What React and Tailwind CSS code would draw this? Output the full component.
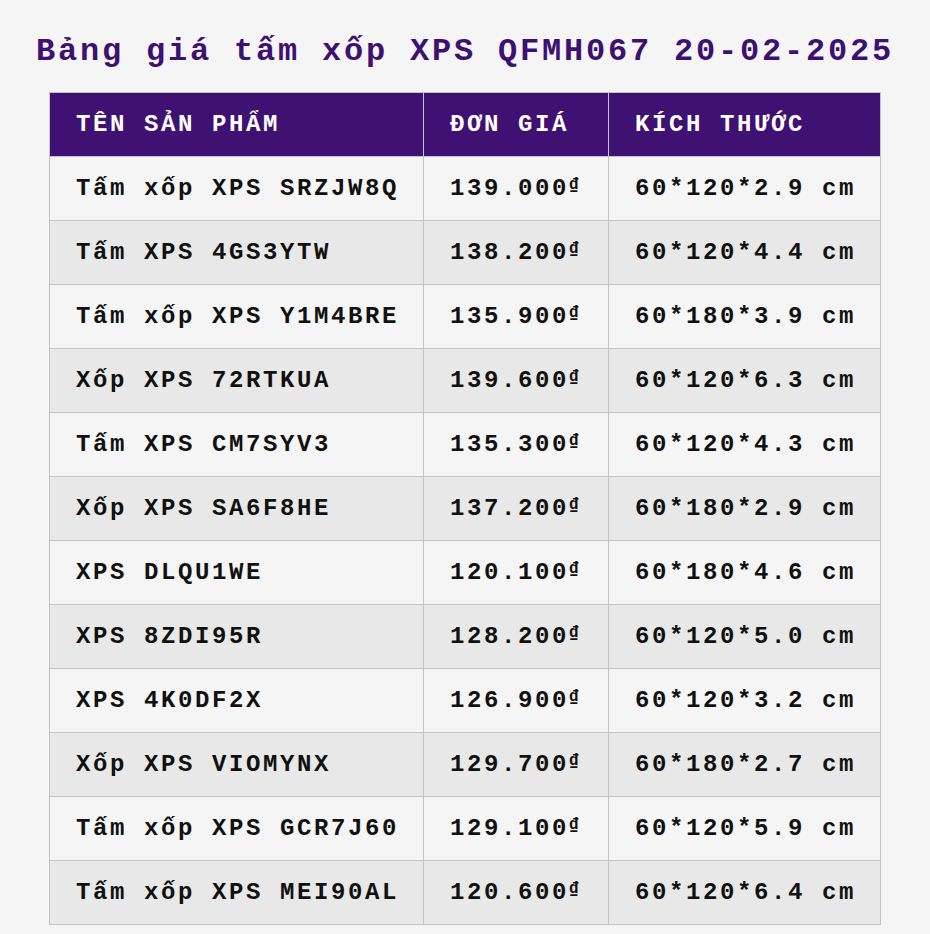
import React from "react";

const rows = [
  ["Tấm xốp XPS SRZJW8Q", "139.000", "60*120*2.9 cm"],
  ["Tấm XPS 4GS3YTW", "138.200", "60*120*4.4 cm"],
  ["Tấm xốp XPS Y1M4BRE", "135.900", "60*180*3.9 cm"],
  ["Xốp XPS 72RTKUA", "139.600", "60*120*6.3 cm"],
  ["Tấm XPS CM7SYV3", "135.300", "60*120*4.3 cm"],
  ["Xốp XPS SA6F8HE", "137.200", "60*180*2.9 cm"],
  ["XPS DLQU1WE", "120.100", "60*180*4.6 cm"],
  ["XPS 8ZDI95R", "128.200", "60*120*5.0 cm"],
  ["XPS 4K0DF2X", "126.900", "60*120*3.2 cm"],
  ["Xốp XPS VIOMYNX", "129.700", "60*180*2.7 cm"],
  ["Tấm xốp XPS GCR7J60", "129.100", "60*120*5.9 cm"],
  ["Tấm xốp XPS MEI90AL", "120.600", "60*120*6.4 cm"],
];

export default function App() {
  return (
    <div
      className="min-h-[934px] w-full bg-[#f5f5f5] pt-[28px] pb-[10px]"
      style={{ fontFamily: '"Courier New", "Liberation Mono", monospace' }}
    >
      <h1 className="text-center text-[32px] leading-[48px] font-bold tracking-[2.8px] text-[#3d1171]">
        Bảng giá tấm xốp XPS QFMH067 20-02-2025
      </h1>
      <table className="mx-auto mt-[16px] w-[831px] table-fixed border-collapse text-[24px] font-bold tracking-[2.6px]">
        <colgroup>
          <col className="w-[374px]" />
          <col className="w-[185px]" />
          <col className="w-[272px]" />
        </colgroup>
        <thead>
          <tr className="h-[64px] bg-[#3f1172] text-white">
            <th className="border border-[#c4c4c4] pl-[26px] text-left font-bold">TÊN SẢN PHẨM</th>
            <th className="border border-[#c4c4c4] pl-[26px] text-left font-bold">ĐƠN GIÁ</th>
            <th className="border border-[#c4c4c4] pl-[26px] text-left font-bold">KÍCH THƯỚC</th>
          </tr>
        </thead>
        <tbody>
          {rows.map((r, i) => (
            <tr key={i} className={`h-[64px] text-[#111111] ${i % 2 === 0 ? "bg-[#f5f5f5]" : "bg-[#e8e8e8]"}`}>
              <td className="border border-[#c4c4c4] pl-[26px] whitespace-nowrap">{r[0]}</td>
              <td className="border border-[#c4c4c4] pl-[26px] whitespace-nowrap">
                {r[1]}
                <span className="text-[16px] align-[6px] underline tracking-normal">₫</span>
              </td>
              <td className="border border-[#c4c4c4] pl-[26px] whitespace-nowrap">{r[2]}</td>
            </tr>
          ))}
        </tbody>
      </table>
    </div>
  );
}
